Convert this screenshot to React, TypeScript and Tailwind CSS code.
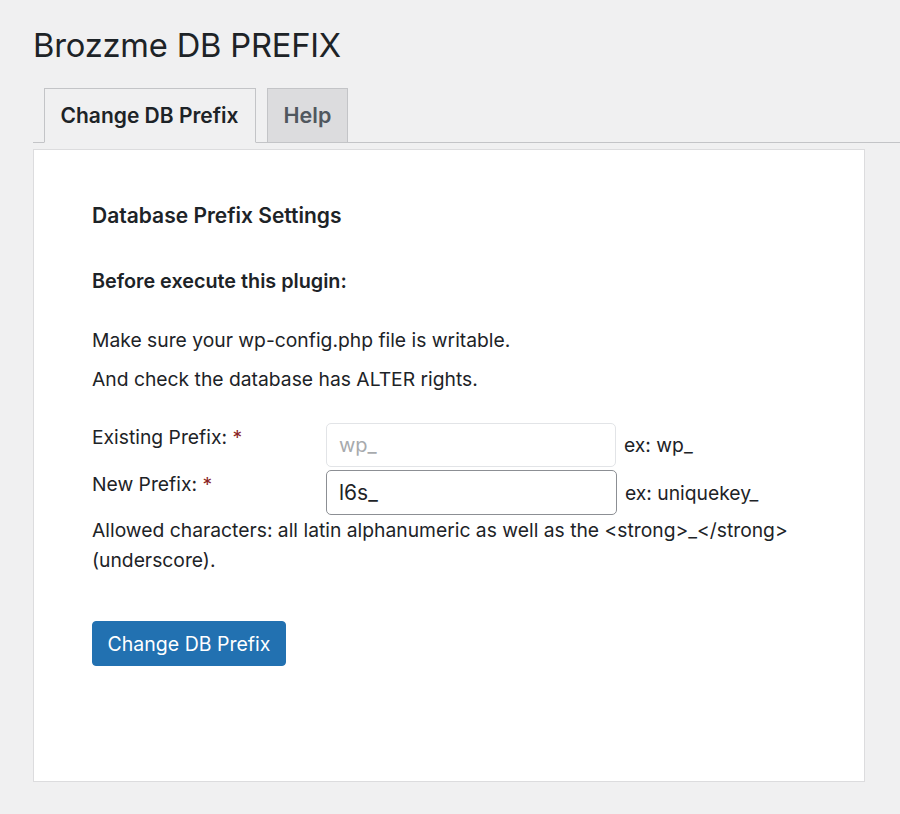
import React from "react";

export default function App() {
  return (
    <div className="min-h-[814px] w-[900px] overflow-hidden bg-[#f0f0f1] font-['Inter','Noto_Sans',sans-serif] text-[#1d2327]">
      <h1 className="pl-[33px] pt-[26px] text-[32.7px] font-normal leading-[38px] tracking-[-0.2px]">
        Brozzme DB PREFIX
      </h1>

      <div className="ml-[33px] mt-[24px] flex h-[55px] items-end gap-[11px] border-b border-[#c3c4c7] pl-[11px]">
        <div className="-mb-px flex h-[55px] w-[212px] items-center justify-center border border-b-[#f0f0f1] border-[#c3c4c7] bg-[#f0f0f1] pr-[1px] text-[21px] font-semibold text-[#1d2327]">
          Change DB Prefix
        </div>
        <div className="flex h-[54px] w-[81px] items-center justify-center border border-b-0 border-[#c3c4c7] bg-[#dcdcde] text-[21.5px] font-semibold text-[#50575e]">
          Help
        </div>
      </div>

      <div className="ml-[33px] mt-[6px] h-[633px] w-[832px] border border-[#dcdcde] bg-white pl-[58px] pt-[52px] text-[19.3px] leading-[28px] text-[#1d2327]">
        <h2 className="text-[21px] font-semibold leading-[28px]">Database Prefix Settings</h2>
        <p className="mt-[37px] text-[19.8px] font-semibold">Before execute this plugin:</p>
        <p className="mt-[31px]">Make sure your wp-config.php file is writable.</p>
        <p className="mt-[11px]">And check the database has ALTER rights.</p>

        <div className="mt-[30px] flex flex-col gap-[3px]">
          <div className="flex items-start">
            <div className="w-[234px] leading-[28px]">
              Existing Prefix: <span className="text-[#8a2424]">*</span>
            </div>
            <div className="flex h-[44px] items-center">
              <div className="flex h-[44px] w-[290px] items-center rounded-[5px] border border-[#e2e4e7] bg-white px-[12px] text-[20px] text-[#a7aaad]">
                wp_
              </div>
              <span className="ml-[8px]">ex: wp_</span>
            </div>
          </div>
          <div className="flex items-start">
            <div className="w-[234px] leading-[28px]">
              New Prefix: <span className="text-[#8a2424]">*</span>
            </div>
            <div className="flex h-[45px] items-center">
              <div className="flex h-[45px] w-[291px] items-center rounded-[5px] border border-[#8c8f94] bg-white px-[12px] text-[21px] text-[#1d2327]">
                l6s_
              </div>
              <span className="ml-[8px]">ex: uniquekey_</span>
            </div>
          </div>
        </div>

        <p className="leading-[30px]">
          Allowed characters: all latin alphanumeric as well as the &lt;strong&gt;_&lt;/strong&gt;
          <br />
          (underscore).
        </p>

        <button className="mt-[46px] flex h-[45px] w-[194px] items-center justify-center rounded-[4px] border border-[#2271b1] bg-[#2271b1] text-[19.5px] text-white">
          Change DB Prefix
        </button>
      </div>
    </div>
  );
}
